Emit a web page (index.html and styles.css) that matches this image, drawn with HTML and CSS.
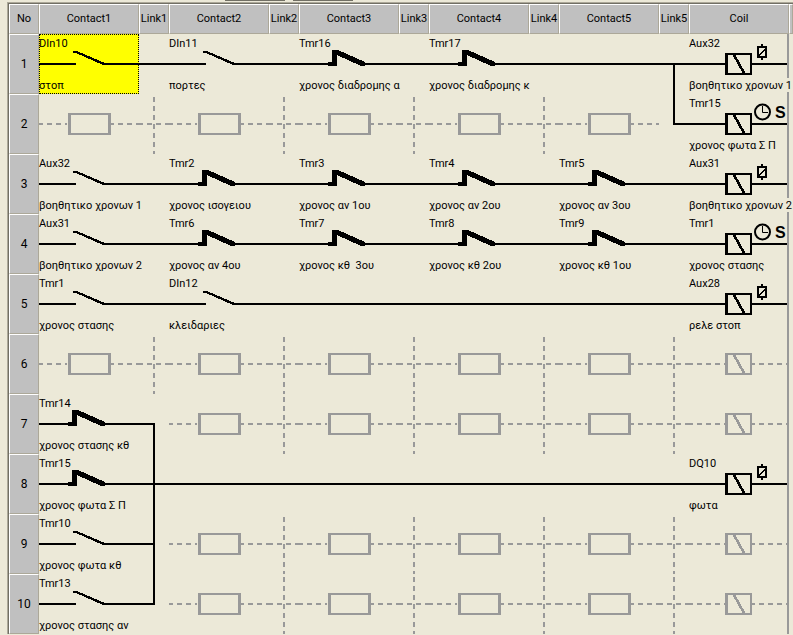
FILE: index.html
```html
<!DOCTYPE html>
<html lang="el">
<head>
<meta charset="utf-8">
<title>Ladder</title>
<link rel="stylesheet" href="styles.css">
</head>
<body>
<svg class="defs" aria-hidden="true">
  <defs>
    <!-- contacts, 44 x 60 -->
    <symbol id="open" viewBox="0 0 44 60"><path d="M0 29H9V31H0ZM6 17H10L38 29H44V31H36L9 19H6Z" fill="currentColor"/></symbol>
    <symbol id="closed" viewBox="0 0 44 60"><path d="M0 29H1V28H5V16H11L38 28V29H44V31H38V32H34L10 21V32H1V31H0Z" fill="currentColor"/></symbol>
    <symbol id="box" viewBox="0 0 44 60"><path d="M1 19H44V41H1ZM4 21V39H41V21Z" fill="currentColor" fill-rule="evenodd"/></symbol>
    <!-- coils, 62 x 60 -->
    <symbol id="coil" viewBox="0 0 62 60"><path d="M0 19H27V41H0ZM3 21V39H25V21Z" fill="currentColor" fill-rule="evenodd"/><path d="M7 20H10L21 40H18Z" fill="currentColor"/></symbol>
    <symbol id="relay" viewBox="0 0 62 60"><path d="M36 10H38V12H42V24H38V26H36V24H32V12H36ZM34 14V22H40V14Z" fill="currentColor" fill-rule="evenodd"/><path d="M34 22L40 15" stroke="currentColor" stroke-width="1.5"/></symbol>
    <symbol id="clock" viewBox="0 0 62 60"><circle cx="37.5" cy="18" r="7.5" fill="none" stroke="currentColor" stroke-width="2"/><path d="M37.5 12V18.5H43" fill="none" stroke="currentColor"/></symbol>
    <!-- links, 30 x 60 -->
    <symbol id="thru" viewBox="0 0 30 60"><path d="M0 30H30" stroke="currentColor" stroke-width="2"/></symbol>
    <symbol id="none" viewBox="0 0 30 60"><path d="M-1 30H30" stroke="currentColor" stroke-width="2" stroke-dasharray="5 4"/><path d="M15 3V60" stroke="currentColor" stroke-width="2" stroke-dasharray="5 4"/></symbol>
    <symbol id="branch" viewBox="0 0 30 60"><path d="M0 30H30M15 30V60" stroke="currentColor" stroke-width="2"/></symbol>
    <symbol id="cross" viewBox="0 0 30 60"><path d="M0 30H30M15 0V60" stroke="currentColor" stroke-width="2"/></symbol>
    <symbol id="up-right" viewBox="0 0 30 60"><path d="M15 0V30H30" fill="none" stroke="currentColor" stroke-width="2"/></symbol>
    <symbol id="left-down" viewBox="0 0 30 60"><path d="M0 30H15V60" fill="none" stroke="currentColor" stroke-width="2"/></symbol>
    <symbol id="left-both" viewBox="0 0 30 60"><path d="M0 30H15M15 0V60" fill="none" stroke="currentColor" stroke-width="2"/></symbol>
    <symbol id="left-up" viewBox="0 0 30 60"><path d="M0 30H15V0" fill="none" stroke="currentColor" stroke-width="2"/></symbol>
  </defs>
</svg>

<div class="strip"><span></span><span></span></div>

<main class="frame">
<table class="ladder">
  <colgroup>
    <col class="narrow"><col><col class="narrow"><col><col class="narrow"><col><col class="narrow"><col><col class="narrow"><col><col class="narrow"><col><col class="rest">
  </colgroup>
  <thead>
    <tr>
      <th scope="col">No</th><th scope="col">Contact1</th><th scope="col">Link1</th><th scope="col">Contact2</th><th scope="col">Link2</th><th scope="col">Contact3</th><th scope="col">Link3</th><th scope="col">Contact4</th><th scope="col">Link4</th><th scope="col">Contact5</th><th scope="col">Link5</th><th scope="col">Coil</th><th></th>
    </tr>
  </thead>
  <tbody>
    <tr>
      <th scope="row">1</th>
      <td class="selected"><div class="cell"><b>DIn10</b><svg><use href="#open"/></svg><i>στοπ</i></div></td>
      <td><svg class="link"><use href="#thru"/></svg></td>
      <td><div class="cell"><b>DIn11</b><svg><use href="#open"/></svg><i>πορτες</i></div></td>
      <td><svg class="link"><use href="#thru"/></svg></td>
      <td><div class="cell"><b>Tmr16</b><svg><use href="#closed"/></svg><i>χρονος διαδρομης α</i></div></td>
      <td><svg class="link"><use href="#thru"/></svg></td>
      <td><div class="cell"><b>Tmr17</b><svg><use href="#closed"/></svg><i>χρονος διαδρομης κ</i></div></td>
      <td><svg class="link"><use href="#thru"/></svg></td>
      <td><div class="wire"></div></td>
      <td><svg class="link"><use href="#branch"/></svg></td>
      <td><div class="cell coil"><b>Aux32</b><svg><use href="#coil"/><use href="#relay"/></svg><i>βοηθητικο χρονων 1</i></div></td>
      <td></td>
    </tr>
    <tr>
      <th scope="row">2</th>
      <td><div class="cell off"><svg><use href="#box"/></svg></div></td>
      <td><svg class="link off"><use href="#none"/></svg></td>
      <td><div class="cell off"><svg><use href="#box"/></svg></div></td>
      <td><svg class="link off"><use href="#none"/></svg></td>
      <td><div class="cell off"><svg><use href="#box"/></svg></div></td>
      <td><svg class="link off"><use href="#none"/></svg></td>
      <td><div class="cell off"><svg><use href="#box"/></svg></div></td>
      <td><svg class="link off"><use href="#none"/></svg></td>
      <td><div class="cell off"><svg><use href="#box"/></svg></div></td>
      <td><svg class="link"><use href="#up-right"/></svg></td>
      <td><div class="cell coil"><b>Tmr15</b><svg><use href="#coil"/><use href="#clock"/><text x="50" y="24">S</text></svg><i>χρονος φωτα Σ Π</i></div></td>
      <td></td>
    </tr>
    <tr>
      <th scope="row">3</th>
      <td><div class="cell"><b>Aux32</b><svg><use href="#open"/></svg><i>βοηθητικο χρονων 1</i></div></td>
      <td><svg class="link"><use href="#thru"/></svg></td>
      <td><div class="cell"><b>Tmr2</b><svg><use href="#closed"/></svg><i>χρονος ισογειου</i></div></td>
      <td><svg class="link"><use href="#thru"/></svg></td>
      <td><div class="cell"><b>Tmr3</b><svg><use href="#closed"/></svg><i>χρονος αν 1ου</i></div></td>
      <td><svg class="link"><use href="#thru"/></svg></td>
      <td><div class="cell"><b>Tmr4</b><svg><use href="#closed"/></svg><i>χρονος αν 2ου</i></div></td>
      <td><svg class="link"><use href="#thru"/></svg></td>
      <td><div class="cell"><b>Tmr5</b><svg><use href="#closed"/></svg><i>χρονος αν 3ου</i></div></td>
      <td><svg class="link"><use href="#thru"/></svg></td>
      <td><div class="cell coil"><b>Aux31</b><svg><use href="#coil"/><use href="#relay"/></svg><i>βοηθητικο χρονων 2</i></div></td>
      <td></td>
    </tr>
    <tr>
      <th scope="row">4</th>
      <td><div class="cell"><b>Aux31</b><svg><use href="#open"/></svg><i>βοηθητικο χρονων 2</i></div></td>
      <td><svg class="link"><use href="#thru"/></svg></td>
      <td><div class="cell"><b>Tmr6</b><svg><use href="#closed"/></svg><i>χρονος αν 4ου</i></div></td>
      <td><svg class="link"><use href="#thru"/></svg></td>
      <td><div class="cell"><b>Tmr7</b><svg><use href="#closed"/></svg><i>χρονος κθ  3ου</i></div></td>
      <td><svg class="link"><use href="#thru"/></svg></td>
      <td><div class="cell"><b>Tmr8</b><svg><use href="#closed"/></svg><i>χρονος κθ 2ου</i></div></td>
      <td><svg class="link"><use href="#thru"/></svg></td>
      <td><div class="cell"><b>Tmr9</b><svg><use href="#closed"/></svg><i>χρονος κθ 1ου</i></div></td>
      <td><svg class="link"><use href="#thru"/></svg></td>
      <td><div class="cell coil"><b>Tmr1</b><svg><use href="#coil"/><use href="#clock"/><text x="50" y="24">S</text></svg><i>χρονος στασης</i></div></td>
      <td></td>
    </tr>
    <tr>
      <th scope="row">5</th>
      <td><div class="cell"><b>Tmr1</b><svg><use href="#open"/></svg><i>χρονος στασης</i></div></td>
      <td><svg class="link"><use href="#thru"/></svg></td>
      <td><div class="cell"><b>DIn12</b><svg><use href="#open"/></svg><i>κλειδαριες</i></div></td>
      <td><svg class="link"><use href="#thru"/></svg></td>
      <td><div class="wire"></div></td>
      <td><svg class="link"><use href="#thru"/></svg></td>
      <td><div class="wire"></div></td>
      <td><svg class="link"><use href="#thru"/></svg></td>
      <td><div class="wire"></div></td>
      <td><svg class="link"><use href="#thru"/></svg></td>
      <td><div class="cell coil"><b>Aux28</b><svg><use href="#coil"/><use href="#relay"/></svg><i>ρελε στοπ</i></div></td>
      <td></td>
    </tr>
    <tr>
      <th scope="row">6</th>
      <td><div class="cell off"><svg><use href="#box"/></svg></div></td>
      <td><svg class="link off"><use href="#none"/></svg></td>
      <td><div class="cell off"><svg><use href="#box"/></svg></div></td>
      <td><svg class="link off"><use href="#none"/></svg></td>
      <td><div class="cell off"><svg><use href="#box"/></svg></div></td>
      <td><svg class="link off"><use href="#none"/></svg></td>
      <td><div class="cell off"><svg><use href="#box"/></svg></div></td>
      <td><svg class="link off"><use href="#none"/></svg></td>
      <td><div class="cell off"><svg><use href="#box"/></svg></div></td>
      <td><svg class="link off"><use href="#none"/></svg></td>
      <td><div class="cell coil off"><svg><use href="#coil"/></svg></div></td>
      <td></td>
    </tr>
    <tr>
      <th scope="row">7</th>
      <td><div class="cell"><b>Tmr14</b><svg><use href="#closed"/></svg><i>χρονος στασης κθ</i></div></td>
      <td><svg class="link"><use href="#left-down"/></svg></td>
      <td><div class="cell off"><svg><use href="#box"/></svg></div></td>
      <td><svg class="link off"><use href="#none"/></svg></td>
      <td><div class="cell off"><svg><use href="#box"/></svg></div></td>
      <td><svg class="link off"><use href="#none"/></svg></td>
      <td><div class="cell off"><svg><use href="#box"/></svg></div></td>
      <td><svg class="link off"><use href="#none"/></svg></td>
      <td><div class="cell off"><svg><use href="#box"/></svg></div></td>
      <td><svg class="link off"><use href="#none"/></svg></td>
      <td><div class="cell coil off"><svg><use href="#coil"/></svg></div></td>
      <td></td>
    </tr>
    <tr>
      <th scope="row">8</th>
      <td><div class="cell"><b>Tmr15</b><svg><use href="#closed"/></svg><i>χρονος φωτα Σ Π</i></div></td>
      <td><svg class="link"><use href="#cross"/></svg></td>
      <td><div class="wire"></div></td>
      <td><svg class="link"><use href="#thru"/></svg></td>
      <td><div class="wire"></div></td>
      <td><svg class="link"><use href="#thru"/></svg></td>
      <td><div class="wire"></div></td>
      <td><svg class="link"><use href="#thru"/></svg></td>
      <td><div class="wire"></div></td>
      <td><svg class="link"><use href="#thru"/></svg></td>
      <td><div class="cell coil"><b>DQ10</b><svg><use href="#coil"/><use href="#relay"/></svg><i>φωτα</i></div></td>
      <td></td>
    </tr>
    <tr>
      <th scope="row">9</th>
      <td><div class="cell"><b>Tmr10</b><svg><use href="#open"/></svg><i>χρονος φωτα κθ</i></div></td>
      <td><svg class="link"><use href="#left-both"/></svg></td>
      <td><div class="cell off"><svg><use href="#box"/></svg></div></td>
      <td><svg class="link off"><use href="#none"/></svg></td>
      <td><div class="cell off"><svg><use href="#box"/></svg></div></td>
      <td><svg class="link off"><use href="#none"/></svg></td>
      <td><div class="cell off"><svg><use href="#box"/></svg></div></td>
      <td><svg class="link off"><use href="#none"/></svg></td>
      <td><div class="cell off"><svg><use href="#box"/></svg></div></td>
      <td><svg class="link off"><use href="#none"/></svg></td>
      <td><div class="cell coil off"><svg><use href="#coil"/></svg></div></td>
      <td></td>
    </tr>
    <tr>
      <th scope="row">10</th>
      <td><div class="cell"><b>Tmr13</b><svg><use href="#open"/></svg><i>χρονος στασης αν</i></div></td>
      <td><svg class="link"><use href="#left-up"/></svg></td>
      <td><div class="cell off"><svg><use href="#box"/></svg></div></td>
      <td><svg class="link off"><use href="#none"/></svg></td>
      <td><div class="cell off"><svg><use href="#box"/></svg></div></td>
      <td><svg class="link off"><use href="#none"/></svg></td>
      <td><div class="cell off"><svg><use href="#box"/></svg></div></td>
      <td><svg class="link off"><use href="#none"/></svg></td>
      <td><div class="cell off"><svg><use href="#box"/></svg></div></td>
      <td><svg class="link off"><use href="#none"/></svg></td>
      <td><div class="cell coil off"><svg><use href="#coil"/></svg></div></td>
      <td></td>
    </tr>
  </tbody>
</table>
</main>
</body>
</html>
```

FILE: styles.css
```css
body {
  margin: 0;
  background: #ece9d8;
  color: #000;
  font: 11px/16px Roboto, "Liberation Sans", sans-serif;
}

.defs {
  display: block;
  width: 0;
  height: 0;
}

/* lower edge of the toolbar buttons */
.strip {
  display: flex;
  gap: 8px;
  height: 2px;
  padding-left: 225px;
}

.strip span {
  width: 60px;
  height: 1px;
  background: #716f64;
}

.frame {
  margin-left: 7px;
  border: 1px solid #aca899;
  border-width: 1px 0 0 1px;
}

.ladder {
  width: 100%;
  min-width: 680px;
  table-layout: fixed;
  border-collapse: separate;
  border-spacing: 0;
  border-top: 1px solid #716f64;
  border-left: 1px solid #716f64;
}

.narrow {
  width: 30px;
}

.rest {
  width: 4px;
}

th,
td {
  box-sizing: border-box;
  padding: 0;
}

th {
  height: 60px;
  background: #c0c0c0;
  border: 1px solid #fff;
  border-right-color: #aca899;
  border-bottom-color: #aca899;
  font-size: 12px;
  font-weight: normal;
  text-align: center;
  white-space: nowrap;
}

thead th {
  height: 30px;
  font-size: 11px;
}

.selected {
  background: #ff0;
  outline: 1px dotted #000;
  outline-offset: -1px;
}

svg {
  shape-rendering: crispEdges;
}

#clock {
  shape-rendering: auto;
}

.link {
  display: block;
  width: 30px;
  height: 60px;
}

/* name on top, wire and symbol across the middle, description below */
.cell {
  display: grid;
  grid-template-columns: 1fr 44px 1fr;
  grid-template-rows: 20px 24px 16px;
  --lead: #000;
  --tail: #000;
}

.cell::before,
.cell::after {
  content: "";
  grid-area: 1 / 1 / -1 / 2;
  height: 2px;
  margin-top: 29px;
  background: var(--lead);
}

.cell::after {
  grid-area: 1 / 3 / -1 / 4;
  background: var(--tail);
}

.cell svg {
  grid-area: 1 / 2 / -1 / 3;
  width: 100%;
  height: 60px;
}

.cell b,
.cell i {
  z-index: 1;
  grid-area: 1 / 1 / 2 / -1;
  justify-self: start;
  font-weight: normal;
  font-style: normal;
  line-height: 20px;
  white-space: pre;
}

.cell i {
  grid-area: 3 / 1 / 4 / -1;
  line-height: 16px;
}

.coil {
  grid-template-columns: 1fr 27px 35px;
  border-right: 2px solid #999;
}

.coil svg {
  grid-area: 1 / 2 / -1 / 4;
}

.coil i {
  height: 14px;
  background: #ece9d8;
}

.coil text {
  font: bold 16px "Liberation Sans", sans-serif;
}

.off {
  color: #999;
  --lead: repeating-linear-gradient(90deg, #999 0 4px, transparent 4px 8px, #999 8px 9px);
  --tail: repeating-linear-gradient(90deg, #999 0 3px, transparent 3px 7px, #999 7px 9px);
}

.wire {
  height: 2px;
  background: #000;
}
```
